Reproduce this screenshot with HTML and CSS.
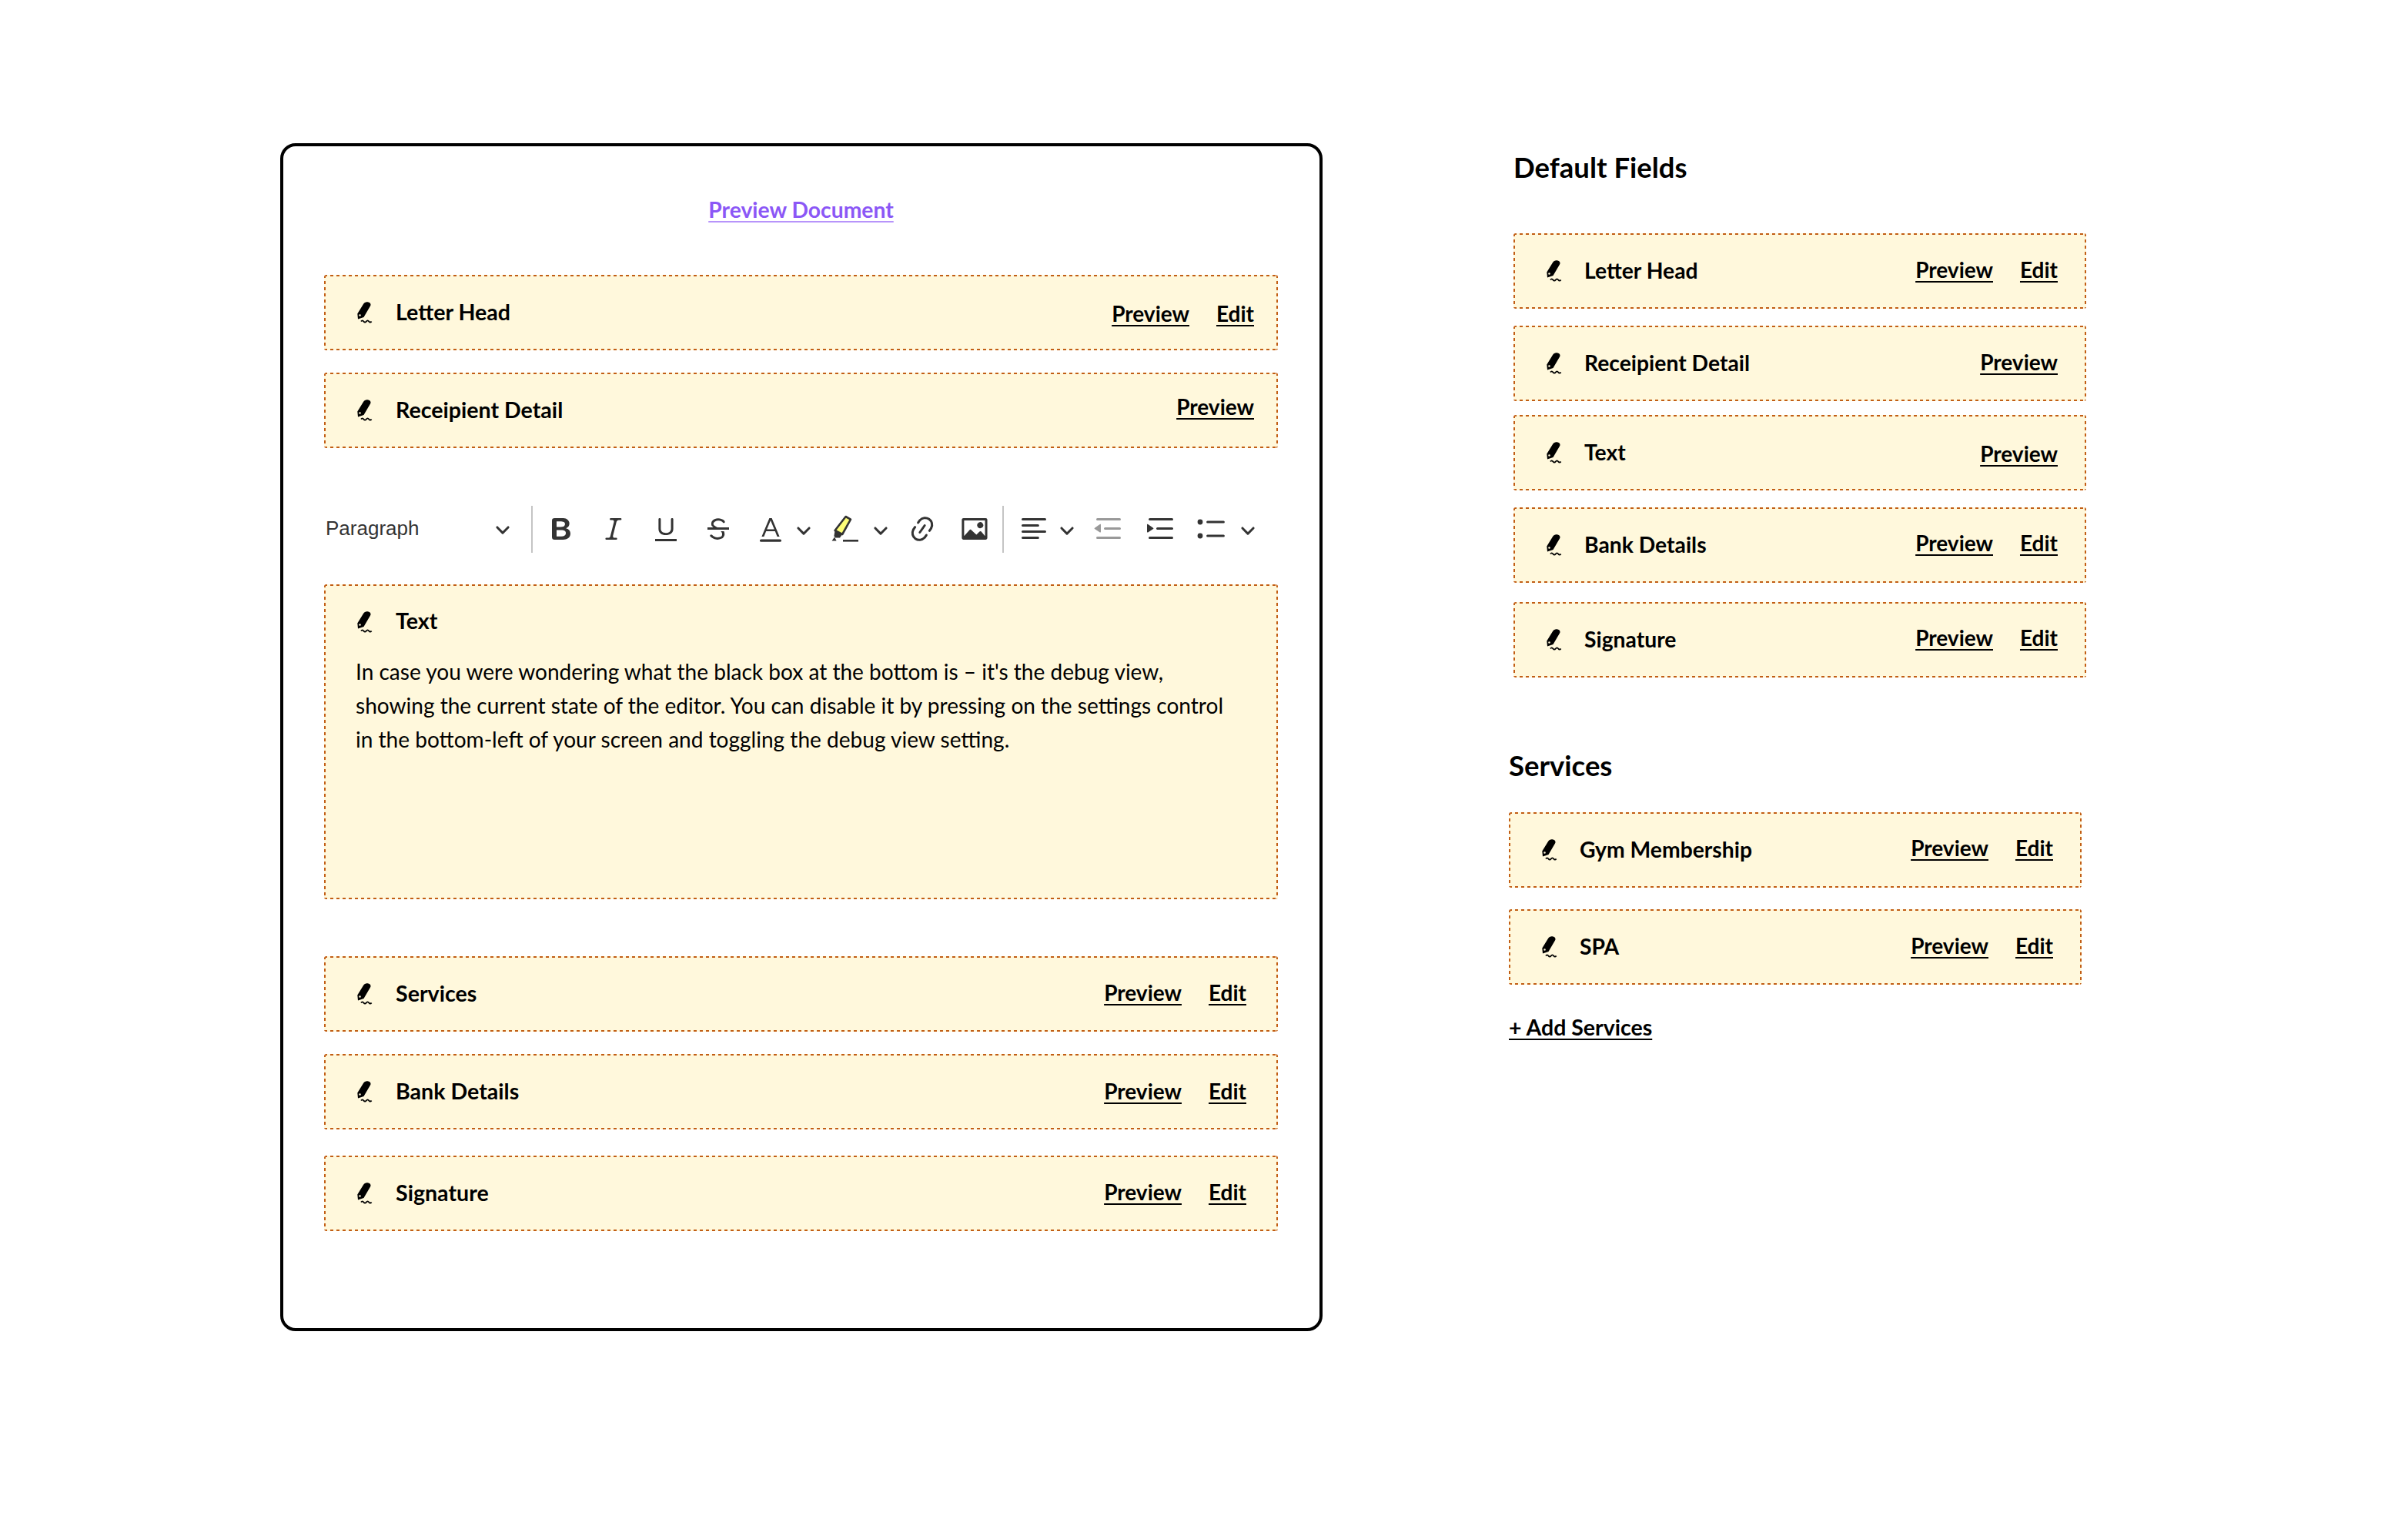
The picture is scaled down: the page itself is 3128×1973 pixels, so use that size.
FILE: index.html
```html
<!DOCTYPE html>
<html>
<head>
    <meta charset="utf-8">
    <title>Document Template</title>
    <link rel="stylesheet" href="styles.css">
</head>
<body>
<svg class="defs" width="0" height="0">
    <symbol id="pen" viewBox="0 0 20 28">
        <path fill-rule="evenodd" d="M8 3C9.5.6 12-.2 14.500.6c3 1 3.600 3 2.500 5L8.500 20 1 22.500.3 15.500zM3.500 16.200a1.300 1.300 0 1 0 0 2.600 1.300 1.300 0 0 0 0-2.600z"/>
        <path d="M5 25.500q1.700-2.400 3.400 0t3.400 0 3.400 0 3.400 0" fill="none" stroke="#000" stroke-width="1.800"/>
    </symbol>
    <symbol id="arrow" viewBox="0 0 10 10">
        <path d="M.941 4.523a.75.75 0 1 1 1.060-1.060l3.006 3.005 3.005-3.005a.75.75 0 1 1 1.060 1.060l-3.549 3.550a.75.75 0 0 1-1.080.001L.941 4.523z"/>
    </symbol>
</svg>

<main class="page">
    <section class="doc-card">
        <a class="preview-doc" href="#">Preview Document</a>

        <div class="field">
            <svg class="pen"><use href="#pen"/></svg>
            <span class="field-name">Letter Head</span>
            <span class="links links-down"><a href="#">Preview</a><a href="#">Edit</a></span>
        </div>
        <div class="field gap-29">
            <svg class="pen"><use href="#pen"/></svg>
            <span class="field-name">Receipient Detail</span>
            <span class="links links-up"><a href="#">Preview</a></span>
        </div>

        <div class="toolbar">
            <div class="tb-select">
                <span>Paragraph</span>
                <svg class="tb-arrow"><use href="#arrow"/></svg>
            </div>
            <span class="tb-divider"></span>
            <span class="tb-btn tb-first"><svg viewBox="0 0 20 20"><path d="M10.187 17H5.773c-.637 0-1.092-.138-1.364-.415-.273-.277-.409-.718-.409-1.323V4.738c0-.617.14-1.062.419-1.332.279-.27.73-.406 1.354-.406h4.68c.69 0 1.288.041 1.793.124.506.083.96.242 1.36.478.341.197.644.447.906.75a3.262 3.262 0 0 1 .808 2.162c0 1.401-.722 2.426-2.167 3.075C15.050 10.175 16 11.315 16 13.010a3.756 3.756 0 0 1-2.296 3.504 6.100 6.100 0 0 1-1.517.377c-.571.073-1.238.110-2 .110zm-.217-6.217H7v4.087h3.069c1.977 0 2.965-.690 2.965-2.072 0-.707-.256-1.220-.768-1.537-.512-.319-1.277-.478-2.296-.478zM7 5.130v3.619h2.606c.729 0 1.292-.067 1.690-.2a1.600 1.600 0 0 0 .910-.765c.165-.267.247-.566.247-.897 0-.707-.260-1.176-.778-1.409-.519-.232-1.310-.348-2.375-.348H7z"/></svg></span>
            <span class="tb-btn"><svg viewBox="0 0 20 20"><path d="m9.586 14.633.021.004c-.036.335.095.655.393.962.082.083.173.150.274.201h1.474a.6.6 0 1 1 0 1.200H5.304a.6.6 0 0 1 0-1.200h1.150c.474-.070.809-.182 1.005-.334.157-.122.291-.320.404-.597l2.416-9.550a1.053 1.053 0 0 0-.281-.823 1.120 1.120 0 0 0-.442-.296H8.150a.6.6 0 0 1 0-1.200h6.443a.6.6 0 1 1 0 1.200h-1.195c-.376.056-.650.155-.823.296-.215.175-.423.439-.623.790l-2.366 9.347z"/></svg></span>
            <span class="tb-btn"><svg viewBox="0 0 20 20"><path d="M3 18v-1.500h14V18zm2.200-8V3.600c0-.4.4-.6.8-.6.3 0 .7.2.7.6v6.200c0 2 1.300 2.800 3.200 2.800 1.900 0 3.400-.9 3.400-2.900V3.600c0-.4.4-.6.8-.6.3 0 .7.2.7.6V10c0 2.700-2.200 4-4.900 4-2.600 0-4.700-1.200-4.700-4z"/></svg></span>
            <span class="tb-btn"><svg viewBox="0 0 20 20"><path d="M7 16.400c-.8-.4-1.500-.9-2.200-1.500a.6.6 0 0 1-.2-.5l.3-.6h1c1 1.200 2.100 1.700 3.700 1.700 1 0 1.800-.3 2.300-.6.6-.4.6-1.200.6-1.300.2-1.200-.9-2.100-.9-2.100h2.100c.3.700.4 1.200.4 1.700v.8l-.6 1.200c-.6.8-1.100 1-1.600 1.200a6 6 0 0 1-2.400.6c-1 0-1.800-.3-2.500-.6zM6.800 9L6 8.300c-.4-.5-.5-.8-.5-1.600 0-.7.1-1.300.5-1.800.4-.6 1-1 1.600-1.300a6.300 6.300 0 0 1 4.700 0 4 4 0 0 1 1.700 1l.3.7c0 .1.2.4-.2.7-.4.2-.9.1-1 0a3 3 0 0 0-1.200-1c-.4-.2-1-.3-2-.4-.7 0-1.400.2-2 .6-.8.6-1 .8-1 1.500 0 .8.5 1 1.200 1.500.6.4 1.100.7 1.900 1H6.800z"/><path d="M3 10.500V9h14v1.500z"/></svg></span>
            <span class="tb-btn"><svg viewBox="0 0 20 20"><path d="M12.400 10.300 10 4.500l-2.400 5.800h4.800zm.5 1.200H7.100L5.700 15H4.200l5-12h1.600l5 12h-1.500l-1.400-3.500z"/><rect x="3" y="16.700" width="14" height="1.700" rx=".8"/></svg></span>
            <svg class="tb-arrow tb-split tb-split-color"><use href="#arrow"/></svg>
            <span class="tb-btn"><svg viewBox="0 0 20 20"><path d="M10.800 2 14 3.800 8.600 13.500 3.800 11z" fill="#fdfd77" stroke="#333" stroke-width="1.300" stroke-linejoin="round"/><path d="M3.800 11l4.800 2.500-1.600 2.300H4.100l-.9-1.200zM3.500 15.200l-1.700 2.500h3z"/><rect x="9" y="17" width="10" height="1.300"/></svg></span>
            <svg class="tb-arrow tb-split tb-split-marker"><use href="#arrow"/></svg>
            <span class="tb-btn"><svg viewBox="0 0 20 20"><path d="m11.077 15 .991-1.416a.75.75 0 1 1 1.229.860l-1.148 1.640a.748.748 0 0 1-.217.206 5.251 5.251 0 0 1-8.503-5.955.741.741 0 0 1 .120-.274l1.147-1.639a.75.75 0 1 1 1.228.860L4.933 10.700l.006.003a3.750 3.750 0 0 0 6.132 4.294l.006.004zm5.494-5.335a.748.748 0 0 1-.120.274l-1.147 1.639a.75.75 0 1 1-1.228-.860l.860-1.230a3.750 3.750 0 0 0-6.144-4.301l-.860 1.229a.75.75 0 0 1-1.229-.860l1.148-1.640a.748.748 0 0 1 .217-.206 5.251 5.251 0 0 1 8.503 5.955zm-4.563-2.532a.75.75 0 0 1 .184 1.045l-3.155 4.505a.75.75 0 1 1-1.229-.860l3.155-4.506a.75.75 0 0 1 1.045-.184z"/></svg></span>
            <span class="tb-btn"><svg viewBox="0 0 20 20"><path d="M6.910 10.540c.26-.23.64-.21.88.030l3.360 3.140 2.230-2.060a.64.64 0 0 1 .87 0l2.520 2.970V4.500H3.200v10.120l3.710-4.080zm10.270-7.510c.6 0 1.090.47 1.090 1.050v11.840c0 .59-.49 1.060-1.090 1.060H2.790c-.6 0-1.090-.47-1.090-1.060V4.080c0-.58.49-1.050 1.100-1.050h14.380zm-5.220 5.560a1.960 1.960 0 1 1 3.400-1.960 1.960 1.960 0 0 1-3.400 1.960z"/></svg></span>
            <span class="tb-divider tb-divider-second"></span>
            <span class="tb-btn"><svg viewBox="0 0 20 20"><path d="M2 3.750c0 .414.336.75.75.75h14.500a.75.75 0 1 0 0-1.500H2.750a.75.75 0 0 0-.75.75zm0 8c0 .414.336.75.75.75h14.500a.75.75 0 1 0 0-1.500H2.750a.75.75 0 0 0-.75.75zm0 4c0 .414.336.75.75.75h9.929a.75.75 0 1 0 0-1.500H2.750a.75.75 0 0 0-.75.75zm0-8c0 .414.336.75.75.75h9.929a.75.75 0 1 0 0-1.500H2.750a.75.75 0 0 0-.75.75z"/></svg></span>
            <svg class="tb-arrow tb-split tb-split-align"><use href="#arrow"/></svg>
            <span class="tb-btn tb-off"><svg viewBox="0 0 20 20"><path d="M2 3.750c0 .414.336.75.75.75h14.500a.75.75 0 1 0 0-1.500H2.750a.75.75 0 0 0-.75.75zm5 6c0 .414.336.75.75.75h9.500a.75.75 0 1 0 0-1.500h-9.500a.75.75 0 0 0-.75.75zM2.750 16.500h14.500a.75.75 0 1 0 0-1.500H2.750a.75.75 0 1 0 0 1.500zm1.618-9.550L.98 9.358a.4.4 0 0 0 .013.661l3.390 2.207A.4.4 0 0 0 5 11.892V7.275a.4.4 0 0 0-.632-.326z"/></svg></span>
            <span class="tb-btn"><svg viewBox="0 0 20 20"><path d="M2 3.750c0 .414.336.75.75.75h14.500a.75.75 0 1 0 0-1.500H2.750a.75.75 0 0 0-.75.75zm5 6c0 .414.336.75.75.75h9.500a.75.75 0 1 0 0-1.500h-9.500a.75.75 0 0 0-.75.75zM2.750 16.500h14.500a.75.75 0 1 0 0-1.500H2.750a.75.75 0 1 0 0 1.500zM1.632 6.950 5.020 9.358a.4.4 0 0 1-.013.661l-3.390 2.207A.4.4 0 0 1 1 11.892V7.275a.4.4 0 0 1 .632-.326z"/></svg></span>
            <span class="tb-btn tb-list"><svg viewBox="0 0 20 20"><circle cx="3" cy="5.500" r="1.700"/><circle cx="3" cy="14.500" r="1.700"/><path d="M7.800 5.500h10.400M7.800 14.500h10.400" stroke="#333" stroke-width="1.500" stroke-linecap="round"/></svg></span>
            <svg class="tb-arrow tb-split tb-split-list"><use href="#arrow"/></svg>
        </div>

        <div class="field field-text">
            <div class="field-head">
                <svg class="pen"><use href="#pen"/></svg>
                <span class="field-name">Text</span>
            </div>
            <p class="field-body">In case you were wondering what the black box at the bottom is – it's the debug view, showing the current state of the editor. You can disable it by pressing on the settings control in the bottom-left of your screen and toggling the debug view setting.</p>
        </div>

        <div class="field field-wide gap-74">
            <svg class="pen"><use href="#pen"/></svg>
            <span class="field-name">Services</span>
            <span class="links"><a href="#">Preview</a><a href="#">Edit</a></span>
        </div>
        <div class="field field-wide gap-29">
            <svg class="pen"><use href="#pen"/></svg>
            <span class="field-name">Bank Details</span>
            <span class="links links-nudge"><a href="#">Preview</a><a href="#">Edit</a></span>
        </div>
        <div class="field field-wide gap-34">
            <svg class="pen"><use href="#pen"/></svg>
            <span class="field-name">Signature</span>
            <span class="links"><a href="#">Preview</a><a href="#">Edit</a></span>
        </div>
    </section>

    <aside class="sidebar">
        <section class="side-defaults">
            <h2>Default Fields</h2>
            <div class="field">
                <svg class="pen"><use href="#pen"/></svg>
                <span class="field-name">Letter Head</span>
                <span class="links"><a href="#">Preview</a><a href="#">Edit</a></span>
            </div>
            <div class="field gap-22">
                <svg class="pen"><use href="#pen"/></svg>
                <span class="field-name">Receipient Detail</span>
                <span class="links"><a href="#">Preview</a></span>
            </div>
            <div class="field gap-18">
                <svg class="pen"><use href="#pen"/></svg>
                <span class="field-name">Text</span>
                <span class="links links-down"><a href="#">Preview</a></span>
            </div>
            <div class="field gap-22">
                <svg class="pen"><use href="#pen"/></svg>
                <span class="field-name">Bank Details</span>
                <span class="links links-lift"><a href="#">Preview</a><a href="#">Edit</a></span>
            </div>
            <div class="field gap-25">
                <svg class="pen"><use href="#pen"/></svg>
                <span class="field-name">Signature</span>
                <span class="links links-lift"><a href="#">Preview</a><a href="#">Edit</a></span>
            </div>
        </section>

        <section class="side-services">
            <h2>Services</h2>
            <div class="field">
                <svg class="pen"><use href="#pen"/></svg>
                <span class="field-name">Gym Membership</span>
                <span class="links links-lift"><a href="#">Preview</a><a href="#">Edit</a></span>
            </div>
            <div class="field gap-28">
                <svg class="pen"><use href="#pen"/></svg>
                <span class="field-name">SPA</span>
                <span class="links"><a href="#">Preview</a><a href="#">Edit</a></span>
            </div>
            <a class="add-link" href="#">+ Add Services</a>
        </section>
    </aside>
</main>
</body>
</html>
```

FILE: styles.css
```css
* {
    box-sizing: border-box;
}
body {
    margin: 0;
    background: #ffffff;
    color: #000000;
    font-family: Lato, "Open Sans", sans-serif;
}
a {
    color: inherit;
    text-decoration-thickness: 2px;
    text-underline-offset: 4px;
}
.defs {
    display: block;
    height: 0;
}
.page {
    display: flex;
    align-items: flex-start;
    padding: 186px 0 0 364px;
}

/* left card */
.doc-card {
    width: 1354px;
    height: 1543px;
    padding: 0 54px 0 53px;
    border: 4px solid #000000;
    border-radius: 20px;
}
.preview-doc {
    display: block;
    width: 242px;
    margin: 66px auto 69px auto;
    line-height: 32px;
    font-size: 28.300px;
    font-weight: 700;
    text-align: center;
    color: #8b57f6;
    text-decoration-color: #b794fa;
    white-space: nowrap;
}

/* dashed field rows, the dash is drawn so its 8px period can be set */
.field {
    display: flex;
    align-items: center;
    height: 98px;
    padding: 0 31px 0 43px;
    border-radius: 3px;
    background:
        linear-gradient(90deg, #c25e15 4.500px, transparent 0) top left / 8px 2px repeat-x,
        linear-gradient(90deg, #c25e15 4.500px, transparent 0) bottom left / 8px 2px repeat-x,
        linear-gradient(180deg, #c25e15 4.500px, transparent 0) top left / 2px 8px repeat-y,
        linear-gradient(180deg, #c25e15 4.500px, transparent 0) top right / 2px 8px repeat-y,
        #fff8dc;
}
.field-wide {
    padding-right: 41px;
}
.gap-18 { margin-top: 18px; }
.gap-22 { margin-top: 22px; }
.gap-25 { margin-top: 25px; }
.gap-28 { margin-top: 28px; }
.gap-29 { margin-top: 29px; }
.gap-34 { margin-top: 34px; }
.gap-74 { margin-top: 74px; }
.pen {
    width: 20px;
    height: 28px;
    margin-right: 30px;
    flex-shrink: 0;
}
.field-name {
    margin-bottom: 3px;
    font-size: 28.600px;
    font-weight: 700;
    line-height: 34px;
}
.links {
    display: flex;
    gap: 35px;
    margin-left: auto;
    padding-bottom: 4px;
    font-size: 28px;
    font-weight: 700;
    line-height: 34px;
}
.links-down { margin-top: 5px; }
.links-nudge { margin-top: 2px; }
.links-up { margin-bottom: 6px; }
.links-lift { margin-bottom: 3px; }

/* editor toolbar */
.toolbar {
    display: flex;
    align-items: center;
    height: 61px;
    margin: 75px 0 41px 0;
    color: #333333;
    fill: #333333;
}
.tb-select {
    display: flex;
    align-items: center;
    justify-content: space-between;
    width: 269px;
    padding: 0 0 2px 2px;
    font-family: "Liberation Sans", Arial, sans-serif;
    font-size: 26px;
}
.tb-select .tb-arrow {
    margin-right: 27px;
}
.tb-arrow {
    width: 20px;
    height: 20px;
    flex-shrink: 0;
    margin-top: 1px;
}
.tb-split {
    margin-left: -1px;
    margin-right: 10px;
}
.tb-split-color { margin-right: 9px; }
.tb-split-marker { margin-left: 3px; }
.tb-split-align { margin-left: -1px; }
.tb-split-list { margin-left: 4px; }
.tb-divider {
    width: 2px;
    height: 61px;
    background: #c4c4c4;
}
.tb-divider-second {
    margin: 0 5px 0 2px;
}
.tb-btn {
    display: flex;
    justify-content: center;
    width: 68px;
    margin-bottom: 2px;
    flex-shrink: 0;
}
.tb-first { margin-left: 3px; }
.tb-list { margin-left: -3px; }
.tb-btn svg {
    width: 40px;
    height: 40px;
}
.tb-off svg {
    fill: #999999;
}

/* text field */
.field-text {
    display: block;
    height: 409px;
    padding: 0 36px 0 43px;
}
.field-head {
    display: flex;
    align-items: center;
    height: 97px;
}
.field-body {
    max-width: 1134px;
    margin: -6px 0 0 -2px;
    font-size: 28.050px;
    line-height: 44px;
}

/* right column */
.sidebar {
    width: 750px;
    margin-left: 242px;
    padding-top: 11px;
}
.sidebar h2 {
    margin: 0;
    height: 40px;
    font-size: 36.500px;
    font-weight: 700;
    line-height: 40px;
}
.sidebar .field {
    padding-right: 37px;
}
.sidebar .pen {
    margin-right: 29px;
}
.sidebar .field-name {
    font-size: 28.300px;
}
.side-defaults {
    margin-left: 6px;
}
.side-defaults h2 {
    margin-bottom: 66px;
}
.side-services {
    width: 744px;
    margin-top: 94px;
}
.side-services h2 {
    margin-bottom: 41px;
}
.add-link {
    display: inline-block;
    margin-top: 38px;
    font-size: 28.500px;
    font-weight: 700;
    line-height: 34px;
}
```
